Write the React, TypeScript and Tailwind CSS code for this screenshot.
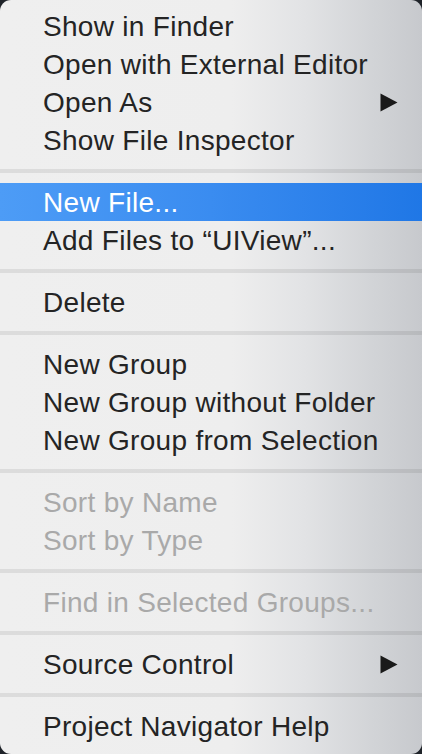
type Item = { label: string; disabled?: boolean; active?: boolean; submenu?: boolean };

const groups: Item[][] = [
  [
    { label: 'Show in Finder' },
    { label: 'Open with External Editor' },
    { label: 'Open As', submenu: true },
    { label: 'Show File Inspector' },
  ],
  [{ label: 'New File...', active: true }, { label: 'Add Files to “UIView”...' }],
  [{ label: 'Delete' }],
  [{ label: 'New Group' }, { label: 'New Group without Folder' }, { label: 'New Group from Selection' }],
  [{ label: 'Sort by Name', disabled: true }, { label: 'Sort by Type', disabled: true }],
  [{ label: 'Find in Selected Groups...', disabled: true }],
  [{ label: 'Source Control', submenu: true }],
  [{ label: 'Project Navigator Help' }],
];

function Arrow() {
  return (
    <svg width="18" height="19" viewBox="0 0 18 19" className="shrink-0">
      <path d="M0.5 0.5 L17.5 9.5 L0.5 18.5 Z" fill="#1a1a1a" />
    </svg>
  );
}

function Row({ item }: { item: Item }) {
  const color = item.active ? 'text-white' : item.disabled ? 'text-[#a9a9a9]' : 'text-[#242424]';
  return (
    <div
      className={`h-[38px] flex items-center pl-[43px] pr-[24px] ${color} ${
        item.active ? 'bg-gradient-to-r from-[#4d9cf6] via-[#3a8cf0] to-[#1f77e6]' : ''
      }`}
    >
      <span className="flex-1 text-[28px] leading-none tracking-[0.3px] whitespace-nowrap translate-y-[1px]">{item.label}</span>
      {item.submenu && <Arrow />}
    </div>
  );
}

export default function App() {
  return (
    <div className="w-[422px] h-[754px] bg-[#1f2329] overflow-hidden" style={{ fontFamily: '"Liberation Sans", Arial, sans-serif' }}>
      <div className="h-full rounded-[11px] overflow-hidden bg-[linear-gradient(to_right,#efefef_0%,#eeeeee_55%,#e2e3e5_72%,#d2d4d7_88%,#c7c9cd_100%)] pt-[7px]">
        {groups.map((g, i) => (
          <div key={i}>
            {i > 0 && (
              <div className="py-[10px]">
                <div className="h-[4px] bg-black/[0.08]" />
              </div>
            )}
            {g.map((it) => (
              <Row key={it.label} item={it} />
            ))}
          </div>
        ))}
      </div>
    </div>
  );
}
